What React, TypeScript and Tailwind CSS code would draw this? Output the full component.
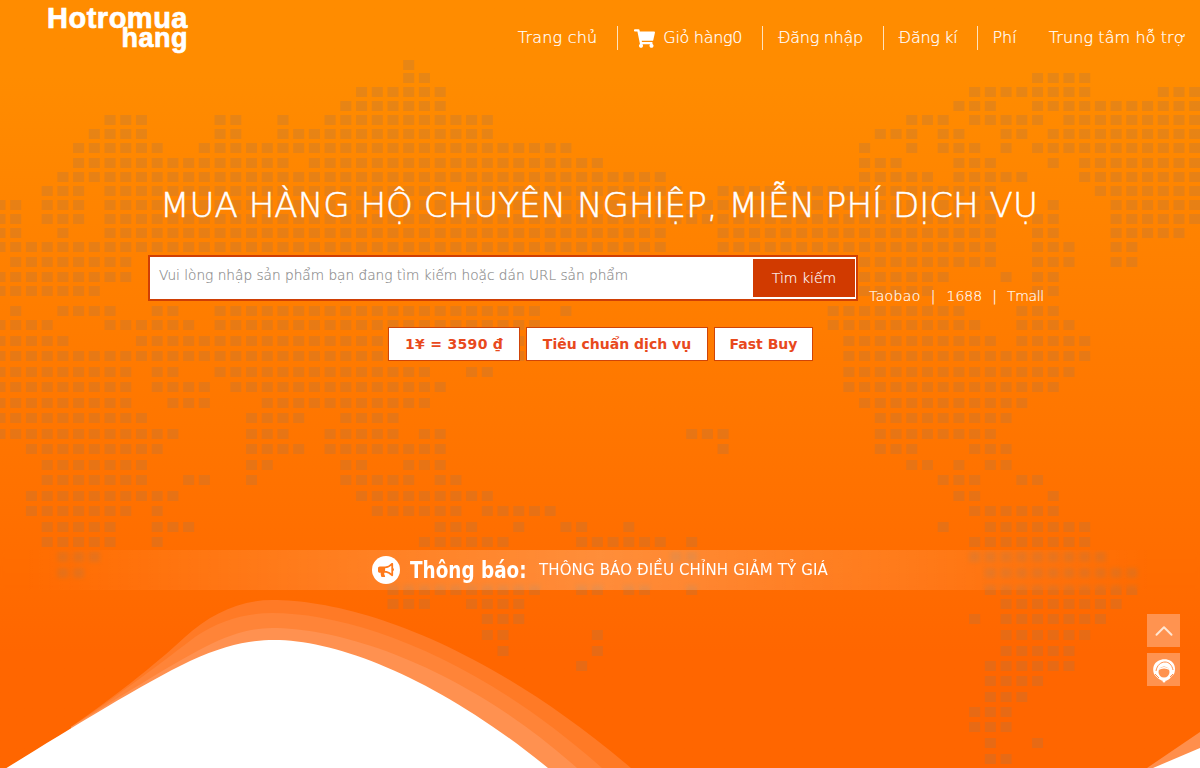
import { ChevronUp } from 'lucide-react'
import { FaBullhorn, FaShoppingCart } from 'react-icons/fa'

// each row: y centre, then [from, to] column runs of the dotted world map
const mapRows: [number, number[][]][] = [
  [65, [[26, 26]]],
  [78, [[26, 27], [66, 69]]],
  [92, [[23, 28], [62, 69], [74, 76]]],
  [106, [[22, 28], [61, 63], [66, 76]]],
  [120, [[7, 9], [14, 15], [18, 18], [21, 31], [58, 60], [62, 66], [68, 76]]],
  [134, [[6, 9], [14, 15], [18, 31], [56, 58], [60, 61], [64, 65], [67, 76]]],
  [148, [[5, 10], [13, 36], [55, 55], [58, 58], [60, 62], [64, 64], [66, 76]]],
  [163, [[5, 18], [20, 38], [55, 57], [61, 63], [67, 67], [69, 76]]],
  [177, [[4, 42], [55, 59], [61, 65], [69, 76]]],
  [191, [[3, 5], [7, 28], [30, 43], [46, 63], [70, 76]]],
  [205, [[0, 1], [3, 5], [7, 63], [67, 67], [71, 76]]],
  [219, [[0, 1], [3, 5], [7, 63], [66, 67], [71, 76]]],
  [233, [[0, 1], [4, 4], [7, 42], [46, 63], [66, 67], [71, 75]]],
  [247, [[0, 42], [46, 63], [66, 68], [71, 72]]],
  [262, [[1, 8], [55, 63], [66, 68], [71, 72]]],
  [277, [[0, 8], [55, 60], [64, 64], [66, 67]]],
  [291, [[0, 6], [55, 59], [66, 67]]],
  [311, [[1, 1], [4, 7], [10, 11], [14, 34], [36, 36], [53, 61], [65, 67]]],
  [325, [[0, 3], [7, 12], [14, 34], [53, 62], [65, 68]]],
  [341, [[0, 4], [9, 34], [54, 63], [65, 69]]],
  [356, [[0, 34], [54, 69]]],
  [372, [[0, 8], [10, 11], [14, 27], [30, 31], [54, 68]]],
  [387, [[0, 8], [10, 13], [15, 28], [54, 67]]],
  [403, [[0, 8], [11, 13], [17, 27], [55, 65]]],
  [418, [[0, 9], [16, 19], [22, 25], [56, 64]]],
  [434, [[0, 11], [16, 18], [21, 25], [27, 28], [44, 46], [56, 63]]],
  [449, [[2, 10], [16, 19], [21, 28], [46, 46], [56, 58], [62, 64]]],
  [465, [[3, 9], [16, 17], [22, 23], [26, 28], [58, 59], [61, 61], [63, 64]]],
  [480, [[3, 9], [12, 13], [16, 16], [22, 26], [28, 29], [60, 62], [65, 66]]],
  [496, [[2, 11], [23, 31], [61, 62], [67, 67]]],
  [511, [[2, 8], [10, 10], [24, 29], [31, 35], [62, 67]]],
  [527, [[3, 7], [10, 12], [28, 30], [33, 33], [36, 37], [40, 40], [60, 60], [63, 69]]],
  [542, [[3, 7], [10, 10], [27, 32], [37, 42], [44, 44], [62, 69]]],
  [557, [[4, 6], [43, 44], [62, 70]]],
  [573, [[4, 5], [63, 72]]],
  [590, [[25, 34], [37, 38], [40, 41], [44, 44], [63, 72]]],
  [604, [[25, 27], [30, 33], [64, 71]]],
  [619, [[31, 33], [62, 62], [64, 70]]],
  [635, [[31, 32], [38, 38], [64, 69]]],
  [651, [[32, 32], [38, 38], [64, 68]]],
  [666, [[37, 37], [63, 68]]],
  [681, [[63, 66]]],
  [697, [[63, 65]]],
  [712, [[62, 64]]],
  [727, [[62, 64]]],
  [743, [[63, 63], [66, 66]]],
  [759, [[63, 64]]],
]

const mapDots = mapRows.flatMap(([y, runs]) =>
  runs.flatMap(([from, to]) =>
    Array.from({ length: to - from + 1 }, (_, i) => ({ x: (from + i) * 15.72 - 5.5, y: y - 5 }))
  )
)

const DotMap = () => (
  <svg className="absolute inset-0" width="1200" height="768" viewBox="0 0 1200 768">
    {mapDots.map((d) => (
      <rect key={`${d.x}-${d.y}`} x={d.x} y={d.y} width="11" height="10" fill="#a8764a" fillOpacity="0.28" />
    ))}
  </svg>
)

const Wave = () => (
  <svg className="absolute inset-0" width="1200" height="768" viewBox="0 0 1200 768">
    <path d="M71 727C110 700 155 665 185 637C210 614 240 600 272 600C350 600 480 640 631 768H71Z" fill="#ff7a26" />
    <path d="M71 727C115 698 165 660 195 637C218 621 245 613 272 613C350 613 475 655 602 768H71Z" fill="#ff8438" />
    <path d="M71 727C115 700 170 665 205 647C228 635 250 628 272 628C345 628 465 668 577 768H71Z" fill="#ff9150" />
    <path d="M0 772C60 735 140 685 190 661C225 645 250 640 274 640C340 640 440 680 548 768Z" fill="#ffffff" />
    <path d="M1147 768L1200 732V768Z" fill="#ff8f4c" />
    <path d="M1153 768L1200 748V768Z" fill="#ffffff" />
  </svg>
)

const NavItem = ({ children, divider = true, className = '' }: { children: React.ReactNode; divider?: boolean; className?: string }) => (
  <div className={`flex h-6 items-center ${divider ? 'border-r border-[#ffe3bd]' : ''} ${className}`}>{children}</div>
)

const Headset = () => (
  <svg width="26" height="26" viewBox="0 0 26 26" fill="none">
    <path d="M3 17C1 11 3 6 7 4C11 1.500 16 1.500 20 4C24 7 25 12 23 17L20 20C19 22 16 24 13 24C10 24 6 21 3 17Z" fill="#fff" />
    <path d="M5 14C6 8 10 5 14 5C18 5 21 8 22 13" stroke="#ff9350" strokeWidth="1" />
    <circle cx="13" cy="15" r="5.500" fill="#ff9350" />
    <path d="M7.500 13C9 9 17 9 18.500 13C15 11 11 11 7.500 13Z" fill="#fff" />
    <path d="M4 17L8 21M22 17L19 20" stroke="#ff9350" strokeWidth="1" />
    <circle cx="13" cy="24" r="1.500" fill="#fff" />
  </svg>
)

export default function App() {
  return (
    <div className="relative h-[768px] w-full overflow-hidden bg-gradient-to-b from-[#ff8c00] from-10% to-[#ff6600] to-85% font-['DejaVu_Sans',sans-serif] text-white">
      <DotMap />
      <Wave />

      <div className="relative">
        <header className="flex h-[58px] items-start justify-between pr-[14px]">
          <div className="ml-[47px] flex w-[141px] flex-col items-end pt-[8px] font-['Liberation_Sans',sans-serif] font-bold [-webkit-text-stroke:0.7px_white]">
            <span className="text-[29px] leading-[20px] tracking-[0.5px]">Hotromua</span>
            <span className="text-[27px] leading-[20px] tracking-[0.5px]">hang</span>
          </div>
          <nav className="mt-[26px] flex items-center text-[16px] font-extralight text-white [-webkit-text-stroke:0.2px_white]">
            <NavItem className="pr-5 tracking-[0.2px]">Trang chủ</NavItem>
            <NavItem className="gap-2 pr-5 pl-4">
              <FaShoppingCart size={21} className="text-white" />
              <span className="tracking-[-0.3px]">Giỏ hàng0</span>
            </NavItem>
            <NavItem className="pr-5 pl-[15px] tracking-[-0.3px]">Đăng nhập</NavItem>
            <NavItem className="pr-5 pl-[15px] tracking-[-0.3px]">Đăng kí</NavItem>
            <NavItem divider={false} className="pl-[14px]">Phí</NavItem>
            <NavItem divider={false} className="pl-[32px] tracking-[0.1px]">Trung tâm hỗ trợ</NavItem>
          </nav>
        </header>

        <h1 className="mt-[125px] pr-0.5 text-center text-[34.12px] leading-[44px] font-extralight [-webkit-text-stroke:0.5px_white]">MUA HÀNG HỘ CHUYÊN NGHIỆP, MIỄN PHÍ DỊCH VỤ</h1>

        <div className="mt-[28px] ml-[148px] flex items-start">
          <div className="flex h-[46px] w-[710px] border-2 border-[#cf3f05] bg-white py-[2px] pr-px pl-[2px]">
            <span className="flex-1 pt-[6px] pl-[7px] text-[13.7px] leading-[20px] font-extralight text-[#8a8a8a] [-webkit-text-stroke:0.15px_#8a8a8a]">
              Vui lòng nhập sản phẩm bạn đang tìm kiếm hoặc dán URL sản phẩm
            </span>
            <span className="flex h-[38px] w-[102px] items-center justify-center bg-[#d13a00] text-[14px] font-extralight text-white [-webkit-text-stroke:0.15px_white]">Tìm kiếm</span>
          </div>
          <div className="ml-[11px] flex gap-[10px] pt-[31px] text-[14px] leading-[20px] font-extralight text-white [-webkit-text-stroke:0.15px_white]">
            <span className="tracking-[0.4px]">Taobao</span>
            <span>|</span>
            <span className="ml-px">1688</span>
            <span>|</span>
            <span className="tracking-[-0.3px]">Tmall</span>
          </div>
        </div>

        <div className="mt-[21px] flex justify-center gap-[6px] pl-px text-[14px] font-bold text-[#e8491d]">
          <span className="flex h-[34px] w-[132px] items-center justify-center border border-[#cf4408] bg-white tracking-[0.3px]">1¥ = 3590 ₫</span>
          <span className="flex h-[34px] w-[182px] items-center justify-center border border-[#cf4408] bg-white">Tiêu chuẩn dịch vụ</span>
          <span className="flex h-[34px] w-[99px] items-center justify-center border border-[#cf4408] bg-white">Fast Buy</span>
        </div>

        <div className="mt-[189px] flex h-10 items-center justify-center bg-gradient-to-r from-[#ffffff00] from-2% via-[#ffffff3a] to-[#ffffff00] to-96% backdrop-blur-[2px]">
          <span className="flex h-7 w-7 items-center justify-center rounded-full bg-white text-[#ff7a1a]">
            <FaBullhorn size={16} />
          </span>
          <span className="ml-[10px] w-[116px] origin-left text-[23px] leading-none font-bold whitespace-nowrap [transform:scaleX(0.8)]">Thông báo:</span>
          <span className="ml-[13px] text-[15px] font-normal tracking-[0.13px]">THÔNG BÁO ĐIỀU CHỈNH GIẢM TỶ GIÁ</span>
        </div>
      </div>

      <div className="absolute top-[614px] right-[20px] flex flex-col gap-[6px]">
        <span className="flex h-[33px] w-[33px] items-center justify-center bg-[#ff9350]">
          <ChevronUp size={30} strokeWidth={1.6} className="text-[#ffe6d2]" />
        </span>
        <span className="flex h-[33px] w-[33px] items-center justify-center bg-[#ff9350]">
          <Headset />
        </span>
      </div>
    </div>
  )
}
